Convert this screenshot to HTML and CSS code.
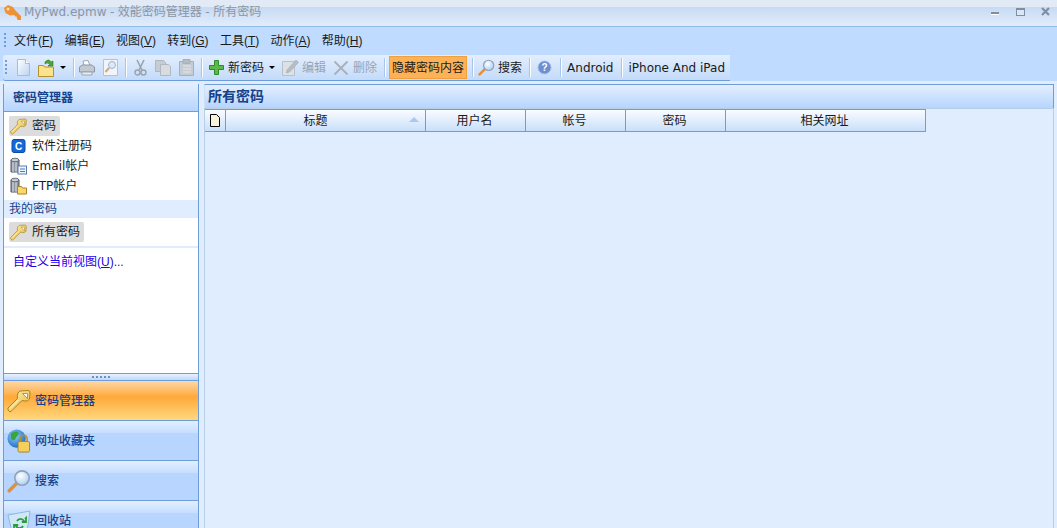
FILE: index.html
```html
<!DOCTYPE html>
<html lang="zh">
<head>
<meta charset="utf-8">
<title>MyPwd.epmw</title>
<link rel="stylesheet" href="styles.css">
</head>
<body>
<svg class="defs" width="0" height="0">
  <defs>
    <linearGradient id="gold" x1="0" y1="0" x2="1" y2="1"><stop offset="0" stop-color="#fff6b8"/><stop offset="1" stop-color="#e8b232"/></linearGradient>
    <linearGradient id="doc" x1="0" y1="0" x2="1" y2="1"><stop offset="0" stop-color="#fff"/><stop offset="1" stop-color="#bcd2f0"/></linearGradient>
    <radialGradient id="globe" cx=".4" cy=".35" r=".7"><stop offset="0" stop-color="#8fd0ff"/><stop offset="1" stop-color="#1d66c0"/></radialGradient>
    <radialGradient id="lens" cx=".4" cy=".35" r=".7"><stop offset="0" stop-color="#fff"/><stop offset="1" stop-color="#a9cdf2"/></radialGradient>
    <symbol id="key" viewBox="0 0 24 24">
      <path d="M13 2L21 1.500Q23 1.500 23 4L22.500 10Q21 12.500 18 12L15 11.500 5 21.500 3 23 1 21V19L10.500 9.500Q10 6 11 4z" fill="url(#gold)" stroke="#a88426" stroke-width="1"/>
      <path d="M15.500 4.500h5v5z" fill="#fff" stroke="#a88426" stroke-width=".8"/>
      <path d="M3 19.500L11.500 11" stroke="#fff" stroke-width="1" opacity=".7"/>
    </symbol>
    <symbol id="drum" viewBox="0 0 16 18">
      <path d="M1 3h8v12H1z" fill="#8f97a2" stroke="#4f5660" stroke-width="1"/>
      <path d="M3 3v12M6 3v12" stroke="#dfe3e8" stroke-width="1"/>
      <ellipse cx="5" cy="3" rx="4" ry="1.800" fill="#c7ccd2" stroke="#4f5660" stroke-width=".8"/>
    </symbol>
    <symbol id="glass" viewBox="0 0 16 16">
      <path d="M1.500 14.500l5-5" stroke="#e0913c" stroke-width="2.400" stroke-linecap="round"/>
      <circle cx="10" cy="6" r="4.800" fill="url(#lens)" stroke="#8da3bd" stroke-width="1.100"/>
    </symbol>
  </defs>
</svg>

<header class="titlebar">
  <svg class="app-icon" width="20" height="20" viewBox="0 0 20 20"><path d="M1 6l4-3 5 2 2 3 6 6v4h-3l-1.500-1.500H14V15l-1.500-.5L11 13 7 13.500 2.500 11z" fill="#ee9238"/><circle cx="5" cy="7" r="1.500" fill="#f9d9b0"/></svg>
  <span class="title-text">MyPwd.epmw - 效能密码管理器 - 所有密码</span>
  <div class="window-controls">
    <span class="win-min"></span>
    <span class="win-max"></span>
    <svg width="9" height="9" viewBox="0 0 9 9"><path d="M1 1l7 7M8 1L1 8" stroke="#7e8ea3" stroke-width="2.200"/></svg>
  </div>
</header>

<nav class="menubar">
  <span class="grip grip-menu"></span>
  <span class="menu-item">文件(<u>F</u>)</span>
  <span class="menu-item">编辑(<u>E</u>)</span>
  <span class="menu-item">视图(<u>V</u>)</span>
  <span class="menu-item">转到(<u>G</u>)</span>
  <span class="menu-item">工具(<u>T</u>)</span>
  <span class="menu-item">动作(<u>A</u>)</span>
  <span class="menu-item">帮助(<u>H</u>)</span>
</nav>

<div class="toolbar-row">
  <div class="toolbar">
    <span class="grip"></span>
    <svg class="m9" width="15" height="17" viewBox="0 0 15 17"><path d="M1.500 .5h8l4 4v12h-12z" fill="url(#doc)" stroke="#a9bcd6"/><path d="M9.500 .5v4h4" fill="#fff" stroke="#a9bcd6"/></svg>
    <svg class="m7" width="18" height="18" viewBox="0 0 18 18"><path d="M.5 6.500h5l1 1.500h9v9.500H.5z" fill="#fbe38e" stroke="#b8902e"/><path d="M7 3c3-3 5-2 6 0l2-1v5h-5l1.500-1.500C10.500 4 9 3.500 7 5z" fill="#49a83a" stroke="#2d7a25" stroke-width=".6"/></svg>
    <span class="caret m4"></span>
    <span class="sep m7"></span>
    <svg class="m4" width="16" height="16" viewBox="0 0 16 16"><path d="M4 1l5-.5 2 5H5z" fill="#fff" stroke="#9ba6b3"/><path d="M.5 7l3-2h9l3 2v5h-15z" fill="#c3c9d1" stroke="#8b95a2"/><path d="M3 12h10v3H3z" fill="#e9ecf0" stroke="#9ba6b3"/></svg>
    <svg class="m8" width="15" height="17" viewBox="0 0 15 17"><path d="M.5 .5h14v16H.5z" fill="#f1f5fb" stroke="#b5bfd8"/><circle cx="9" cy="6" r="3.500" fill="#dbe9f8" stroke="#9fb2cb"/><path d="M6 9l-3.500 4" stroke="#d9a76d" stroke-width="2"/></svg>
    <span class="sep m7"></span>
    <svg class="m7" width="13" height="17" viewBox="0 0 13 17"><path d="M3 1l5 10M10 1L5 11" stroke="#9aa3ad" stroke-width="1.600"/><circle cx="3.500" cy="13.500" r="2.500" fill="none" stroke="#9aa3ad" stroke-width="1.400"/><circle cx="9.500" cy="13.500" r="2.500" fill="none" stroke="#9aa3ad" stroke-width="1.400"/></svg>
    <svg class="m8" width="16" height="16" viewBox="0 0 16 16"><path d="M.5 .5h8l2 2v9H.5z" fill="#c6ccd3" stroke="#b0b7c0"/><path d="M5.500 4.500h8l2 2v9h-10z" fill="#d8dce1" stroke="#b0b7c0"/></svg>
    <svg class="m8" width="15" height="17" viewBox="0 0 15 17"><path d="M.5 2.500h14v14H.5z" fill="#c6ccd3" stroke="#a8afb8"/><path d="M4 .5h7v4H4z" fill="#b4bbc4" stroke="#a8afb8"/><path d="M4 7h8M4 10h8M4 13h8" stroke="#e5e8ec"/></svg>
    <span class="sep m7"></span>
    <svg class="m6" width="15" height="15" viewBox="0 0 15 15"><path d="M5.500 .5h4v5h5v4h-5v5h-4v-5h-5v-4h5z" fill="#5db84a" stroke="#2f8a2a"/></svg>
    <span class="tb-label m4">新密码</span>
    <span class="caret m5"></span>
    <svg class="m7" width="17" height="17" viewBox="0 0 17 17"><path d="M.5 2.500h12v14H.5z" fill="#dde1e6" stroke="#b9c0c9"/><path d="M5 11l9-10 2.500 2.500-9 9.500-3 1z" fill="#b7bdc5" stroke="#a2a9b2" stroke-width=".6"/></svg>
    <span class="tb-label off m3">编辑</span>
    <svg class="m7" width="16" height="16" viewBox="0 0 16 16"><path d="M1.500 1.500l13 13M14.500 1.500l-13 13" stroke="#a9b0b9" stroke-width="1.800"/></svg>
    <span class="tb-label off m4">删除</span>
    <span class="sep m7"></span>
    <span class="hide-btn">隐藏密码内容</span>
    <span class="sep m5"></span>
    <svg class="m4" width="17" height="17"><use href="#glass"/></svg>
    <span class="tb-label m3">搜索</span>
    <span class="sep m7"></span>
    <svg class="m6" width="15" height="15" viewBox="0 0 15 15"><circle cx="7.500" cy="7.500" r="6.500" fill="#6b8fd0" stroke="#a9bce0"/><text class="help-q" x="7.500" y="11">?</text></svg>
    <span class="sep m8"></span>
    <span class="tb-label m5">Android</span>
    <span class="sep m8"></span>
    <span class="tb-label m5">iPhone And iPad</span>
  </div>
</div>

<main class="workspace">
  <aside class="sidebar">
    <div class="side-head">密码管理器</div>
    <div class="side-body">
      <ul class="tree first">
        <li class="tree-row"><span class="tree-item on"><svg width="17" height="17"><use href="#key"/></svg>密码</span></li>
        <li class="tree-row"><span class="tree-item"><svg width="17" height="16" viewBox="0 0 16 16"><rect x="1.500" y="1.500" width="13" height="13" rx="2" fill="#1268d8" stroke="#0c4aa8"/><text class="c-mark" x="8" y="12">C</text></svg>软件注册码</span></li>
        <li class="tree-row"><span class="tree-item"><svg width="17" height="18" viewBox="0 0 17 18"><use href="#drum" width="16" height="18"/><rect x="8" y="9" width="8.500" height="8" fill="#eef4fc" stroke="#5e7ca8"/><path d="M10 12h5M10 14.500h5" stroke="#3f7fd0"/></svg>Email帐户</span></li>
        <li class="tree-row"><span class="tree-item"><svg width="17" height="18" viewBox="0 0 17 18"><use href="#drum" width="16" height="18"/><path d="M7.500 9.500h4l1 1.500h4v6h-9z" fill="#fcd76a" stroke="#a88426"/></svg>FTP帐户</span></li>
      </ul>
      <div class="side-section">我的密码</div>
      <ul class="tree">
        <li class="tree-row"><span class="tree-item on"><svg width="17" height="17"><use href="#key"/></svg>所有密码</span></li>
      </ul>
      <div class="side-rule"></div>
      <a class="side-link">自定义当前视图(<u>U</u>)...</a>
    </div>
    <div class="splitter"><span class="dots"></span></div>
    <div class="nav-btn active">
      <svg width="24" height="24"><use href="#key"/></svg><span>密码管理器</span>
    </div>
    <div class="nav-btn">
      <svg width="24" height="24" viewBox="0 0 25 25"><circle cx="10" cy="10" r="9.500" fill="url(#globe)"/><path d="M4 5c3-3 7-3 8-1s-2 3-3 6-4 2-5-1z" fill="#3aa63a"/><path d="M14 13v-3a3.500 3.500 0 0 1 7 0v3" fill="none" stroke="#b98f20" stroke-width="1.600"/><rect x="11.500" y="13" width="12" height="11" rx="1.500" fill="#f5cf5c" stroke="#a88426"/></svg><span>网址收藏夹</span>
    </div>
    <div class="nav-btn">
      <svg width="24" height="24"><use href="#glass"/></svg><span>搜索</span>
    </div>
    <div class="nav-btn">
      <svg width="24" height="24" viewBox="0 0 24 24"><path d="M1 6l22-4-3 21H5z" fill="#cfe8f8" stroke="#8fb8d8"/><path d="M10 12a4 4 0 0 1 7 0l-2 1h4v-4l-1 1M16 17a4 4 0 0 1-7 0l2-1H7v4l1-1" fill="none" stroke="#2f9a3a" stroke-width="1.800"/></svg><span>回收站</span>
    </div>
  </aside>

  <section class="content">
    <div class="content-head">所有密码</div>
    <div class="content-body">
      <div class="grid-head">
        <div class="col col-icon"><svg width="10" height="13" viewBox="0 0 10 13"><path d="M.5 .5h6l3 3v9h-9z" fill="#f7f3dc" stroke="#000"/></svg></div>
        <div class="col col-title">标题<span class="sort"></span></div>
        <div class="col col-100">用户名</div>
        <div class="col col-100">帐号</div>
        <div class="col col-100">密码</div>
        <div class="col col-200">相关网址</div>
      </div>
    </div>
  </section>
</main>
</body>
</html>
```

FILE: styles.css
```css
* { box-sizing: border-box; }
html, body { margin: 0; height: 100%; overflow: hidden; }
body {
  display: flex;
  flex-direction: column;
  height: 528px;
  background: #e0edff;
  color: #1a1a1a;
  font: 12px/16px "DejaVu Sans", "Noto Sans CJK SC", sans-serif;
}
ul { list-style: none; margin: 0; padding: 0; }
svg { display: block; flex: none; }
.defs { position: absolute; }

.titlebar {
  display: flex;
  align-items: center;
  height: 27px;
  flex: none;
  padding: 0 7px 3px 3px;
  border-bottom: 1px solid #8fbde8;
  background: linear-gradient(#e2eaf5 0, #e2eaf5 7px, #c6daf4 7px, #e2edfb 26px);
}
.app-icon { margin-right: 1px; }
.title-text { color: #8b95a3; font-size: 12px; word-spacing: -.3px; }
.window-controls { display: flex; align-items: center; margin-left: auto; }
.win-min { width: 8px; height: 3px; margin-right: 17px; margin-top: 4px; background: #7e8ea3; border-bottom: 1px solid #fff; }
.win-max { width: 9px; height: 8px; margin-right: 16px; border: 1px solid #7e8ea3; border-top-width: 2px; background: #dbe7f6; }

.menubar {
  display: flex;
  align-items: center;
  height: 28px;
  flex: none;
  padding-left: 4px;
  background: #bfdbff;
}
.grip { width: 2px; height: 16px; background: repeating-linear-gradient(#6f9dd9 0 2px, transparent 2px 4px); }
.grip-menu { margin-right: 8px; }
.menu-item { margin-right: 11.3px; white-space: nowrap; font-family: "Liberation Sans", "Noto Sans CJK SC", sans-serif; }

.toolbar-row { flex: none; height: 26px; padding-left: 3px; background: #bfdbff; }
.toolbar {
  display: flex;
  align-items: center;
  width: 727px;
  height: 26px;
  padding-left: 2px;
  border-bottom: 1px solid #6f9dd9;
  border-radius: 3px 0 0 3px;
  background: linear-gradient(#e3eefd, #c3dbfa);
}
.sep { width: 2px; height: 19px; background: linear-gradient(90deg, #a9c6ea 50%, #fff 50%); }
.m3 { margin-left: 3px; }
.m4 { margin-left: 4px; }
.m5 { margin-left: 5px; }
.m6 { margin-left: 6px; }
.m7 { margin-left: 7px; }
.m8 { margin-left: 8px; }
.m9 { margin-left: 9px; }
.caret { width: 0; height: 0; border: 3px solid transparent; border-top: 3px solid #000; border-bottom: 0; }
.tb-label { white-space: nowrap; }
.tb-label.off { color: #9aa3ae; }
.hide-btn {
  display: flex;
  align-items: center;
  justify-content: center;
  width: 78px;
  height: 23px;
  margin-left: 3px;
  border: 1px solid #f0a03c;
  background: #fdb257;
  white-space: nowrap;
}
.help-q { fill: #fff; font: bold 10px "Liberation Sans", sans-serif; text-anchor: middle; }

.workspace { display: flex; flex: 1; min-height: 0; padding: 3px 3px 0; }

.sidebar { display: flex; flex-direction: column; width: 196px; flex: none; overflow: hidden; border: 1px solid #6f9dd9; border-width: 0 1px; }
.side-head {
  height: 28px;
  flex: none;
  padding: 6px 0 0 9px;
  border-bottom: 1px solid #6f9dd9;
  background: linear-gradient(#e4efff, #b6d5fe);
  color: #15428b;
  font-weight: 700;
}
.side-body { height: 261px; flex: none; padding-top: 4px; background: #fff; }
.tree { padding-left: 5px; }
.tree-row { display: flex; align-items: center; height: 20px; }
.tree-item { display: flex; align-items: center; gap: 5px; height: 20px; padding: 0 4px 0 1px; border-radius: 2px; white-space: nowrap; }
.tree-item.on { background: #dcdcdc; }
.side-section { height: 18px; margin-top: 4px; margin-bottom: 4px; padding: 1px 0 0 5px; background: #e0edff; color: #15428b; }
.side-rule { height: 2px; margin-top: 4px; background: #e0edff; }
.side-link { display: block; margin: 6px 0 0 9px; color: #2200ee; font-family: "Liberation Sans", "Noto Sans CJK SC", sans-serif; }

.splitter { display: flex; align-items: center; justify-content: center; height: 8px; flex: none; border: 1px solid #6f9dd9; border-width: 1px 0; background: linear-gradient(#e8f1ff, #bcd8fd); }
.dots { width: 18px; height: 2px; background: repeating-linear-gradient(90deg, #6f8fc0 0 2px, transparent 2px 4px); }
.nav-btn {
  display: flex;
  align-items: center;
  gap: 4px;
  height: 40px;
  flex: none;
  padding: 0 0 0 3px;
  border-bottom: 1px solid #6f9dd9;
  background: linear-gradient(#e3efff, #c6deff 12px, #b7d5ff 12px);
  color: #15428b;
  font-weight: 500;
}
.nav-btn.active { background: linear-gradient(#fdd8a8, #ffa939 16px, #ffd97f); }

.content { display: flex; flex-direction: column; flex: 1; min-width: 0; margin-left: 5px; }
.content-head {
  height: 24px;
  flex: none;
  padding: 3px 0 0 3px;
  border: 1px solid #6f9dd9;
  border-width: 1px 1px 0 1px;
  border-left-color: #cfe0f6;
  background: linear-gradient(#e4efff, #b6d5fe);
  color: #15428b;
  font-size: 14px;
  font-weight: 700;
}
.content-body { flex: 1; border: 1px solid #b8cde6; border-width: 1px 1px 0 1px; background: #e0edff; }
.grid-head { display: flex; width: 721px; height: 23px; border: 1px solid #6f9dd9; border-width: 1px 1px 1px 0; }
.col {
  position: relative;
  display: flex;
  align-items: center;
  justify-content: center;
  height: 100%;
  padding-right: 2px;
  border-left: 1px solid #6f9dd9;
  background: linear-gradient(#fafcff, #c9dffa);
  white-space: nowrap;
}
.col:first-child { border-left: 0; }
.col-icon { width: 20px; padding-right: 0; }
.col-title { width: 200px; padding-right: 20px; }
.col-100 { width: 100px; }
.col-200 { width: 200px; }
.sort { position: absolute; top: 7px; right: 6px; width: 0; height: 0; border: 5px solid transparent; border-top: 0; border-bottom: 5px solid #a9c8f0; }
.c-mark { fill: #fff; font: bold 10px "Liberation Sans", sans-serif; text-anchor: middle; }
```
